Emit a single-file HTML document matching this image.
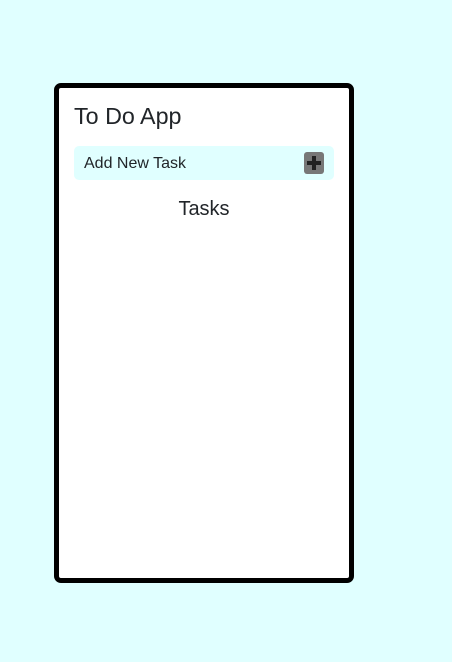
<!DOCTYPE html>
<html><head><style>
html,body{margin:0;padding:0;background:#e0ffff;width:452px;height:662px;overflow:hidden;font-family:"Liberation Sans",sans-serif;color:#212529}
.card{position:absolute;left:54px;top:83px;width:290px;height:490px;border:5px solid #000;border-radius:7px;background:#fff}
h1{position:absolute;left:15px;top:14px;margin:0;font-size:23.3px;font-weight:400;line-height:28px}
.inp{position:absolute;left:15px;top:58px;width:260px;height:34px;background:#e0ffff;border-radius:5px}
.inp span{position:absolute;left:10px;top:9px;font-size:16px}
.btn{position:absolute;left:230px;top:6px;width:20px;height:22px;background:#777;border-radius:3px}
.btn:before{content:"";position:absolute;left:3px;top:9px;width:14px;height:4px;background:#222}
.btn:after{content:"";position:absolute;left:8px;top:4px;width:4px;height:14px;background:#222}
.t{position:absolute;left:0;width:290px;top:110px;text-align:center;font-size:20px}
</style></head><body>
<div class="card"><h1>To Do App</h1><div class="inp"><span>Add New Task</span><div class="btn"></div></div><div class="t">Tasks</div></div>
</body></html>
